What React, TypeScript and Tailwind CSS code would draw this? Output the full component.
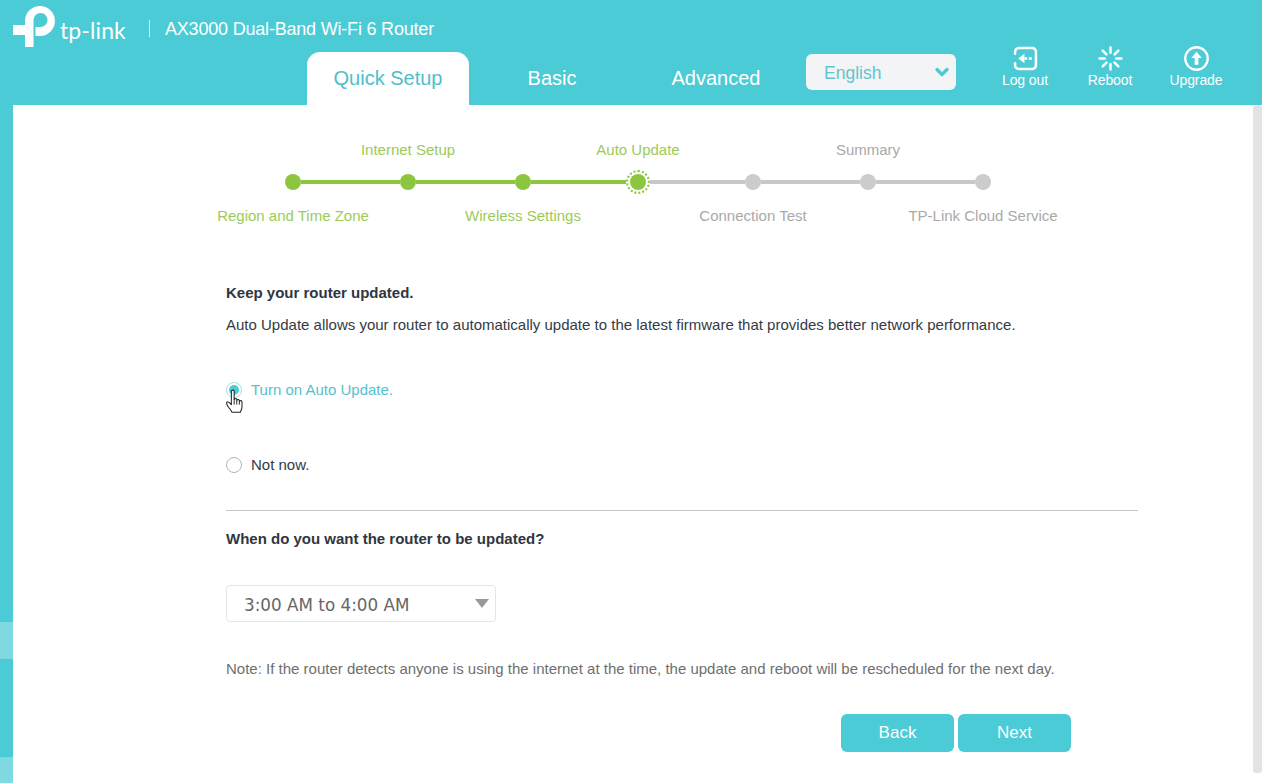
import { ChevronDown } from "lucide-react";

const TEAL = "bg-[#4acbd6]";

function Logo() {
  return (
    <svg viewBox="13 4 43 44" className="h-[44px] w-[43px] shrink-0">
      <path
        fill="#fff"
        d="M13 25H25V20A15 15 0 1 1 40 36H35.500V27H40A7 7 0 1 0 33.500 20V47H25V35H13Z"
      />
    </svg>
  );
}

function LogoutIcon() {
  return (
    <svg viewBox="0 0 24 24" className="h-[25px] w-[25px]" fill="none" stroke="#fff">
      <path strokeWidth="2.400" strokeLinecap="round" d="M2 7.500V5.500A3.500 3.500 0 0 1 5.500 2h13A3.500 3.500 0 0 1 22 5.500v13a3.500 3.500 0 0 1-3.500 3.500h-13A3.500 3.500 0 0 1 2 18.500V16.500" />
      <path fill="#fff" stroke="none" d="M11 7.500v9L5 12z" />
      <path strokeWidth="2.400" d="M11 12h2.500M15 12h3" />
    </svg>
  );
}

function RebootIcon() {
  return (
    <svg viewBox="0 0 24 24" className="h-[25px] w-[25px]" stroke="#fff" strokeWidth="2.400" strokeLinecap="round">
      <path d="M12 1.500v5M12 17.500v5M1.500 12h5M17.500 12h5M4.500 4.500l3.600 3.600M19.500 4.500l-3.600 3.600M4.500 19.500l3.600-3.600M19.500 19.500l-3.600-3.600" />
    </svg>
  );
}

function UpgradeIcon() {
  return (
    <svg viewBox="0 0 24 24" className="h-[25px] w-[25px]" fill="none" stroke="#fff">
      <circle cx="12" cy="12" r="10.800" strokeWidth="2.200" />
      <path fill="#fff" stroke="none" d="M12 5.500l5 6h-3.200V18h-3.600v-6.500H7z" />
    </svg>
  );
}

function HeaderAction({ icon, label, width }: { icon: React.ReactNode; label: string; width: string }) {
  return (
    <div className={`flex flex-col items-center ${width}`}>
      {icon}
      <span className="text-[14px] leading-[18px] tracking-[-0.1px] text-white">{label}</span>
    </div>
  );
}

function Header() {
  return (
    <header className={`${TEAL} h-[105px] shrink-0`}>
      <div className="flex h-[52px] items-start pt-[4px] pl-[13px]">
        <Logo />
        <span className="mt-[9px] ml-[4px] w-[65px] font-['Lato'] text-[23px] leading-[34px] tracking-[0.1px] whitespace-nowrap text-white">tp-link</span>
        <span className="mt-[16px] ml-[24px] h-[17px] w-px bg-white/80" />
        <span className="mt-[14px] ml-[15px] text-[18px] leading-[22px] tracking-[-0.2px] text-white">AX3000 Dual-Band Wi-Fi 6 Router</span>
      </div>
      <div className="flex h-[53px] items-start pl-[307px]">
        <div className="flex h-[53px] w-[162px] items-center justify-center rounded-t-[13px] bg-white pb-[1px] text-[20px] text-[#4dbfca]">Quick Setup</div>
        <div className="flex h-[53px] w-[166px] items-center justify-center pb-[1px] text-[20px] text-white">Basic</div>
        <div className="flex h-[53px] w-[162px] items-center justify-center pb-[1px] text-[20px] text-white">Advanced</div>
        <div className="mt-[2px] ml-[9px] flex h-[36px] w-[150px] items-center justify-between rounded-[6px] bg-[#f3f4f6] pr-[4px] pl-[18px] text-[17.500px] text-[#62c4cd]">
          <span className="pt-[2px]">English</span>
          <ChevronDown className="h-[20px] w-[20px] text-[#4acbd6]" strokeWidth={4} />
        </div>
        <div className="-mt-[6px] ml-[42px] flex">
          <HeaderAction icon={<LogoutIcon />} label="Log out" width="w-[54px]" />
          <HeaderAction icon={<RebootIcon />} label="Reboot" width="ml-[31px] w-[54px]" />
          <HeaderAction icon={<UpgradeIcon />} label="Upgrade" width="ml-[32px] w-[54px]" />
        </div>
      </div>
    </header>
  );
}

const topLabels = [
  { text: "", active: true },
  { text: "Internet Setup", active: true },
  { text: "", active: true },
  { text: "Auto Update", active: true },
  { text: "", active: false },
  { text: "Summary", active: false },
  { text: "", active: false },
];

const bottomLabels = [
  { text: "Region and Time Zone", active: true },
  { text: "", active: true },
  { text: "Wireless Settings", active: true },
  { text: "", active: true },
  { text: "Connection Test", active: false },
  { text: "", active: false },
  { text: "TP-Link Cloud Service", active: false },
];

function StepLabels({ items }: { items: { text: string; active: boolean }[] }) {
  return (
    <div className="grid w-[805px] grid-cols-7">
      {items.map((item, i) => (
        <div key={i} className="flex h-[20px] justify-center">
          <span className={`text-[15px] leading-[20px] whitespace-nowrap ${item.active ? "text-[#9ccb58]" : "text-[#a9a9a9]"}`}>{item.text}</span>
        </div>
      ))}
    </div>
  );
}

function Dot({ on }: { on: boolean }) {
  return <span className={`h-[16px] w-[16px] shrink-0 rounded-full ${on ? "bg-[#8cc63f]" : "bg-[#cccccc]"}`} />;
}

function Line({ on, width }: { on: boolean; width: string }) {
  return <span className={`h-[4px] ${width} ${on ? "bg-[#8cc63f]" : "bg-[#c8c8c8]"}`} />;
}

function Stepper() {
  return (
    <div className="flex w-[805px] flex-col pt-[35px]">
      <StepLabels items={topLabels} />
      <div className="mt-[10px] flex h-[24px] items-center px-[49.500px]">
        <Dot on />
        <Line on width="w-[99px]" />
        <Dot on />
        <Line on width="w-[99px]" />
        <Dot on />
        <Line on width="w-[95px]" />
        <span className="flex h-[24px] w-[24px] shrink-0 items-center justify-center rounded-full border-2 border-dotted border-[#8cc63f]">
          <span className="h-[16px] w-[16px] rounded-full bg-[#8cc63f]" />
        </span>
        <Line on={false} width="w-[95px]" />
        <Dot on={false} />
        <Line on={false} width="w-[99px]" />
        <Dot on={false} />
        <Line on={false} width="w-[99px]" />
        <Dot on={false} />
      </div>
      <div className="mt-[12px]">
        <StepLabels items={bottomLabels} />
      </div>
    </div>
  );
}

function Cursor() {
  return (
    <svg viewBox="1 0 16 23" className="absolute top-[6px] -left-[1.500px] h-[24px] w-[18px]">
      <path
        d="M5.500 2.200c0-1.500 2.700-1.500 2.700 0V10c0-1.300 2.500-1.300 2.500 0v1c0-1.300 2.500-1.300 2.500 0v1c0-1.200 2.500-1.200 2.500.2v5c0 2-1 3-1.500 5H6c-.6-2-2.500-3.500-4-6-.8-1.300-1.500-3-.6-3.700.9-.7 2.200.4 4.100 2.500z"
        fill="#fff"
        stroke="#222"
        strokeWidth="1"
        strokeLinejoin="round"
      />
      <path d="M8.200 10v5M10.700 11v4M13.200 12v3" stroke="#222" strokeWidth="0.900" fill="none" />
    </svg>
  );
}

function Content() {
  return (
    <div className="flex w-[912px] flex-col">
      <h2 className="mt-[57px] text-[15px] leading-[20px] font-bold text-[#2f3640]">Keep your router updated.</h2>
      <p className="mt-[12px] text-[15px] leading-[20px] text-[#333b46]">
        Auto Update allows your router to automatically update to the latest firmware that provides better network performance.
      </p>

      <div className="mt-[45px] flex h-[20px] items-center">
        <span className="relative flex h-[16px] w-[16px] items-center justify-center rounded-full border-[1.500px] border-[#a3e0e5]">
          <span className="h-[10px] w-[10px] rounded-full bg-[#4acbd6]" />
          <Cursor />
        </span>
        <span className="ml-[9px] text-[15px] leading-[20px] text-[#55c2cd]">Turn on Auto Update.</span>
      </div>

      <div className="mt-[55px] flex h-[20px] items-center">
        <span className="h-[16px] w-[16px] rounded-full border-[1.500px] border-[#b5b5b5]" />
        <span className="ml-[9px] text-[15px] leading-[20px] text-[#333b46]">Not now.</span>
      </div>

      <div className="mt-[35px] h-px bg-[#c9c9c9]" />

      <h2 className="mt-[18px] text-[15px] leading-[20px] font-bold text-[#2f3640]">When do you want the router to be updated?</h2>

      <div className="mt-[36px] flex h-[37px] w-[270px] items-center justify-between rounded-[4px] border border-[#e6e6e6] pr-[6px] pl-[17px] font-['DejaVu_Sans'] text-[16.800px] text-[#666666]">
        <span className="pt-[5px]">3:00 AM to 4:00 AM</span>
        <span className="h-0 w-0 border-x-[7px] border-t-[9px] border-x-transparent border-t-[#999999]" />
      </div>

      <p className="mt-[37px] text-[15px] leading-[20px] text-[#6f6f6f]">
        Note: If the router detects anyone is using the internet at the time, the update and reboot will be rescheduled for the next day.
      </p>

      <div className="mt-[35px] flex justify-end gap-[4px] pr-[67px]">
        <button type="button" className={`${TEAL} h-[38px] w-[113px] rounded-[6px] text-[17px] text-white`}>Back</button>
        <button type="button" className={`${TEAL} h-[38px] w-[113px] rounded-[6px] text-[17px] text-white`}>Next</button>
      </div>
    </div>
  );
}

export default function App() {
  return (
    <div className="flex h-[783px] w-[1262px] flex-col overflow-hidden bg-white font-['Liberation_Sans',sans-serif]">
      <Header />
      <div className="flex min-h-0 flex-1">
        <div className={`${TEAL} flex w-[13px] shrink-0 flex-col`}>
          <div className="h-[517px]" />
          <div className="h-[37px] bg-[#7fd9e1]" />
          <div className="h-[98px]" />
          <div className="h-[26px] bg-[#7fd9e1]" />
        </div>
        <main className="flex flex-1 flex-col items-start">
          <div className="ml-[222.500px]">
            <Stepper />
          </div>
          <div className="ml-[213px]">
            <Content />
          </div>
        </main>
        <div className="w-[9px] shrink-0 pb-[10px]">
          <div className="h-full rounded-[3px] bg-[#e2e3e5]" />
        </div>
      </div>
    </div>
  );
}
